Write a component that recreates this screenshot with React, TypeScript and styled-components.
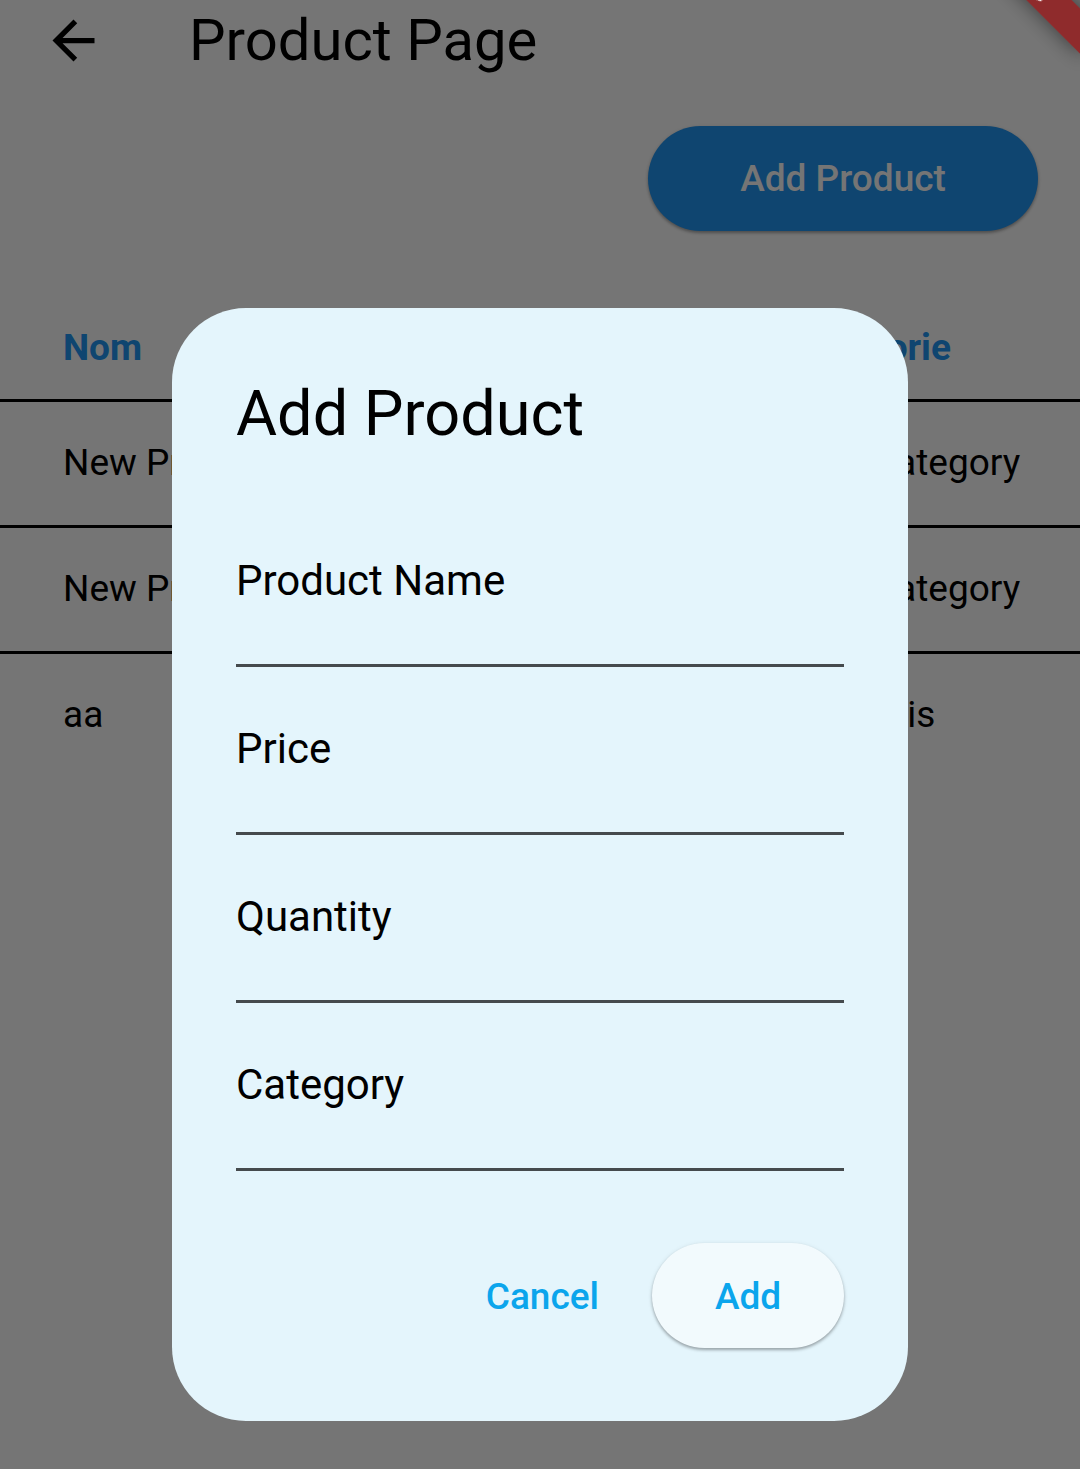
import React from "react";
import styled, { createGlobalStyle } from "styled-components";

const GlobalStyle = createGlobalStyle`
  *, *::before, *::after { box-sizing: border-box; }
  body {
    margin: 0;
    background: #ffffff;
    color: #000000;
    font-family: Roboto, "Liberation Sans", sans-serif;
  }
  button, input { font: inherit; color: inherit; }
`;

const Screen = styled.div`
  display: grid;
  grid-template-columns: minmax(0, 1fr);
  min-height: 100vh;
  overflow: hidden;
`;

const Page = styled.main`
  grid-area: 1 / 1;
  display: flex;
  flex-direction: column;
`;

const AppBar = styled.header`
  display: flex;
  align-items: center;
  gap: 84px;
  padding: 8px 42px;
`;

const BackButton = styled.button`
  display: flex;
  padding: 0;
  border: 0;
  background: none;
`;

const PageTitle = styled.h1`
  margin: 0;
  font-size: 58px;
  line-height: 64px;
  font-weight: 400;
`;

const Toolbar = styled.div`
  display: flex;
  justify-content: flex-end;
  padding: 46px 42px 66px;
`;

const PillButton = styled.button<{ $kind: "filled" | "elevated" | "text" }>`
  height: 105px;
  min-width: ${(p) => (p.$kind === "filled" ? "390px" : p.$kind === "elevated" ? "192px" : "176px")};
  padding: ${(p) => (p.$kind === "filled" ? "0 32px" : "2px 32px 0")};
  border: 0;
  border-radius: 53px;
  font-size: 37px;
  line-height: 52px;
  font-weight: 500;
  color: ${(p) => (p.$kind === "filled" ? "#ffffff" : "#0ba5ec")};
  background: ${(p) =>
    p.$kind === "filled" ? "#2196f3" : p.$kind === "elevated" ? "#f2fafd" : "transparent"};
  box-shadow: ${(p) =>
    p.$kind === "text" ? "none" : "0 2px 3px rgba(0, 0, 0, 0.28), 0 1px 5px rgba(0, 0, 0, 0.1)"};
`;

const ProductTable = styled.table`
  width: 100%;
  table-layout: fixed;
  border-collapse: separate;
  border-spacing: 0;
  font-size: 37px;
  line-height: 52px;
  text-align: left;
  white-space: nowrap;

  th, td {
    padding: 0;
    border-bottom: 3px solid #000000;
  }
  th {
    height: 105px;
    font-weight: 700;
    color: #2196f3;
  }
  td {
    height: 126px;
    padding-bottom: 2px;
  }
  th:first-child, td:first-child { padding-left: 63px; }
  tr:last-child td { border-bottom-color: transparent; }
`;

const CategoryColumn = styled.col`
  width: 291px;
`;

const Scrim = styled.div`
  grid-area: 1 / 1;
  z-index: 1;
  display: flex;
  justify-content: center;
  align-items: flex-start;
  padding: 308px 32px 48px;
  background: rgba(0, 0, 0, 0.54);
`;

const Dialog = styled.form`
  flex: 0 1 736px;
  min-width: 0;
  display: flex;
  flex-direction: column;
  padding: 63px 64px 73px;
  border-radius: 74px;
  background: #e4f5fc;
`;

const DialogTitle = styled.h2`
  margin: 0 0 42px;
  font-size: 63px;
  line-height: 86px;
  font-weight: 400;
`;

const Field = styled.div`
  display: grid;
  height: 168px;
`;

const FieldLabel = styled.label`
  grid-area: 1 / 1;
  align-self: center;
  padding-bottom: 5px;
  font-size: 42px;
  line-height: 64px;
  pointer-events: none;
`;

const FieldInput = styled.input`
  grid-area: 1 / 1;
  width: 100%;
  min-width: 0;
  padding: 0;
  border: 0;
  border-bottom: 3px solid #454a4d;
  border-radius: 0;
  outline: 0;
  background: transparent;
  font-size: 42px;
`;

const Actions = styled.div`
  display: flex;
  justify-content: flex-end;
  gap: 21px;
  padding-top: 72px;
`;

const DebugRibbon = styled.div`
  position: fixed;
  z-index: 2;
  top: -48px;
  right: -42px;
  width: 210px;
  height: 32px;
  transform: rotate(45deg);
  background: #8f2b2c;
  box-shadow: 0 0 20px rgba(0, 0, 0, 0.5);
  color: #ffffff;
  font-size: 26px;
  line-height: 32px;
  font-weight: 900;
  text-align: center;
`;

const products = [
  { name: "New Product", price: "0", quantity: "0", category: "New Category" },
  { name: "New Product", price: "0", quantity: "0", category: "New Category" },
  { name: "aa", price: "12", quantity: "5", category: "Chamois" },
];

const fields = [
  { id: "product-name", label: "Product Name" },
  { id: "price", label: "Price" },
  { id: "quantity", label: "Quantity" },
  { id: "category", label: "Category" },
];

function ArrowBack() {
  return (
    <svg width="63" height="63" viewBox="0 0 24 24" fill="currentColor" aria-hidden="true">
      <path d="M20 11H7.83l5.59-5.59L12 4l-8 8 8 8 1.41-1.41L7.83 13H20v-2z" />
    </svg>
  );
}

export default function App() {
  return (
    <>
      <GlobalStyle />
      <Screen>
        <Page>
          <AppBar>
            <BackButton type="button" aria-label="Back">
              <ArrowBack />
            </BackButton>
            <PageTitle>Product Page</PageTitle>
          </AppBar>
          <Toolbar>
            <PillButton type="button" $kind="filled">Add Product</PillButton>
          </Toolbar>
          <ProductTable>
            <colgroup>
              <col />
              <col />
              <col />
              <CategoryColumn />
            </colgroup>
            <thead>
              <tr>
                <th scope="col">Nom</th>
                <th scope="col">Prix</th>
                <th scope="col">Quantité</th>
                <th scope="col">Catégorie</th>
              </tr>
            </thead>
            <tbody>
              {products.map((product, index) => (
                <tr key={index}>
                  <td>{product.name}</td>
                  <td>{product.price}</td>
                  <td>{product.quantity}</td>
                  <td>{product.category}</td>
                </tr>
              ))}
            </tbody>
          </ProductTable>
        </Page>
        <Scrim>
          <Dialog
            role="dialog"
            aria-modal="true"
            aria-labelledby="dialog-title"
            onSubmit={(event: React.FormEvent) => event.preventDefault()}
          >
            <DialogTitle id="dialog-title">Add Product</DialogTitle>
            {fields.map((field) => (
              <Field key={field.id}>
                <FieldInput id={field.id} type="text" />
                <FieldLabel htmlFor={field.id}>{field.label}</FieldLabel>
              </Field>
            ))}
            <Actions>
              <PillButton type="button" $kind="text">Cancel</PillButton>
              <PillButton type="submit" $kind="elevated">Add</PillButton>
            </Actions>
          </Dialog>
        </Scrim>
      </Screen>
      <DebugRibbon>DEBUG</DebugRibbon>
    </>
  );
}
